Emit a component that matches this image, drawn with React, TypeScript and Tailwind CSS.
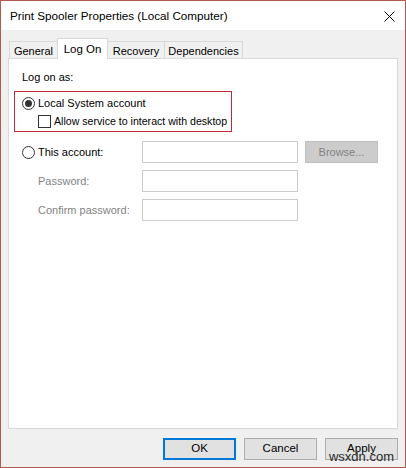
import type { ReactNode } from "react"

const font = { fontFamily: '"Liberation Sans", Arial, sans-serif' }

function Radio({ checked }: { checked?: boolean }) {
  return (
    <span className="flex h-[13px] w-[13px] shrink-0 items-center justify-center rounded-full border border-[#333333] bg-white">
      {checked && <span className="h-[7px] w-[7px] rounded-full bg-[#333333]" />}
    </span>
  )
}

function Tab({ label, active, className }: { label: string; active?: boolean; className: string }) {
  if (active) {
    return (
      <div
        className={`relative z-10 flex h-[21px] shrink-0 items-start justify-center whitespace-nowrap border border-b-0 border-[#d9d9d9] bg-white pt-[3px] text-[11.5px] leading-[14px] text-black ${className}`}
      >
        {label}
      </div>
    )
  }
  return (
    <div
      className={`mb-[1px] flex h-[17px] shrink-0 items-center justify-center whitespace-nowrap border border-b-0 border-[#d9d9d9] bg-[#f0f0f0] pt-[2px] text-[11px] leading-[14px] text-black ${className}`}
    >
      {label}
    </div>
  )
}

function Field({ label, disabled, children }: { label: ReactNode; disabled?: boolean; children?: ReactNode }) {
  return (
    <div className="flex h-[22px] items-center">
      <div
        className={`w-[120px] shrink-0 whitespace-nowrap text-[11px] ${disabled ? "text-[#838383]" : "text-black"}`}
      >
        {label}
      </div>
      <div className="h-[22px] w-[156px] shrink-0 border border-[#cccccc] bg-white" />
      {children}
    </div>
  )
}

function Button({ label, primary }: { label: string; primary?: boolean }) {
  return (
    <div
      className={`flex h-[22px] w-[73px] shrink-0 items-center justify-center bg-[#e1e1e1] text-[11.5px] text-black ${
        primary ? "border-2 border-[#0078d7]" : "border border-[#adadad]"
      }`}
    >
      {label}
    </div>
  )
}

export default function App() {
  return (
    <div style={font} className="flex h-[468px] w-[406px] flex-col border border-[#b3584c] bg-[#f0f0f0]">
      {/* title bar */}
      <div className="flex h-[29px] shrink-0 items-center justify-between bg-white pl-[9px] pr-[10px]">
        <span className="whitespace-nowrap pt-[1px] text-[11.7px] text-black">
          Print Spooler Properties (Local Computer)
        </span>
        <svg width="11" height="11" viewBox="0 0 11 11" className="mt-[1px]">
          <path d="M0.5 0.5 L10.5 10.5 M10.5 0.5 L0.5 10.5" stroke="#000" strokeWidth="1" fill="none" />
        </svg>
      </div>

      <div className="flex flex-1 flex-col px-[7px] pt-[8px]">
        {/* tabs */}
        <div className="mb-[-1px] flex items-end pl-[1px]">
          <Tab label="General" className="w-[49px]" />
          <Tab label="Log On" active className="-ml-[1px] w-[51px]" />
          <Tab label="Recovery" className="-ml-[1px] w-[58px]" />
          <Tab label="Dependencies" className="-ml-[1px] w-[79px]" />
        </div>

        {/* tab page */}
        <div className="h-[371px] w-[390px] border border-[#d9d9d9] bg-white">
          <div className="ml-[13px] mt-[11px] h-[14px] whitespace-nowrap text-[11px] leading-[14px] text-black">
            Log on as:
          </div>

          <div className="ml-[5px] mt-[7px] flex h-[41px] w-[218px] flex-col border border-[#c5283d] pl-[7px] pt-[4px]">
            <div className="flex h-[14px] items-center gap-[3px] whitespace-nowrap text-[11px] text-black">
              <Radio checked />
              <span>Local System account</span>
            </div>
            <div className="ml-[16px] mt-[5px] flex h-[13px] items-center gap-[3px] whitespace-nowrap text-[10.6px] text-black">
              <span className="h-[13px] w-[13px] shrink-0 border border-[#333333] bg-white" />
              <span>Allow service to interact with desktop</span>
            </div>
          </div>

          <div className="ml-[13px] mt-[9px] flex flex-col gap-[7px]">
            <Field
              label={
                <span className="flex items-center gap-[3px]">
                  <Radio />
                  <span>This account:</span>
                </span>
              }
            >
              <div className="ml-[7px] flex h-[22px] w-[73px] shrink-0 items-center justify-center border border-[#bfbfbf] bg-[#cccccc] text-[11px] text-[#838383]">
                Browse...
              </div>
            </Field>
            <Field label={<span className="pl-[16px]">Password:</span>} disabled />
            <Field label={<span className="pl-[16px]">Confirm password:</span>} disabled />
          </div>
        </div>

        {/* dialog buttons */}
        <div className="relative mt-[9px] flex justify-end gap-[8px]">
          <Button label="OK" primary />
          <Button label="Cancel" />
          <Button label="Apply" />
          <span className="absolute right-[4px] top-[12px] whitespace-nowrap text-[13px] leading-[13px] text-[#2a2a2a]">
            wsxdn.com
          </span>
        </div>
      </div>
    </div>
  )
}
